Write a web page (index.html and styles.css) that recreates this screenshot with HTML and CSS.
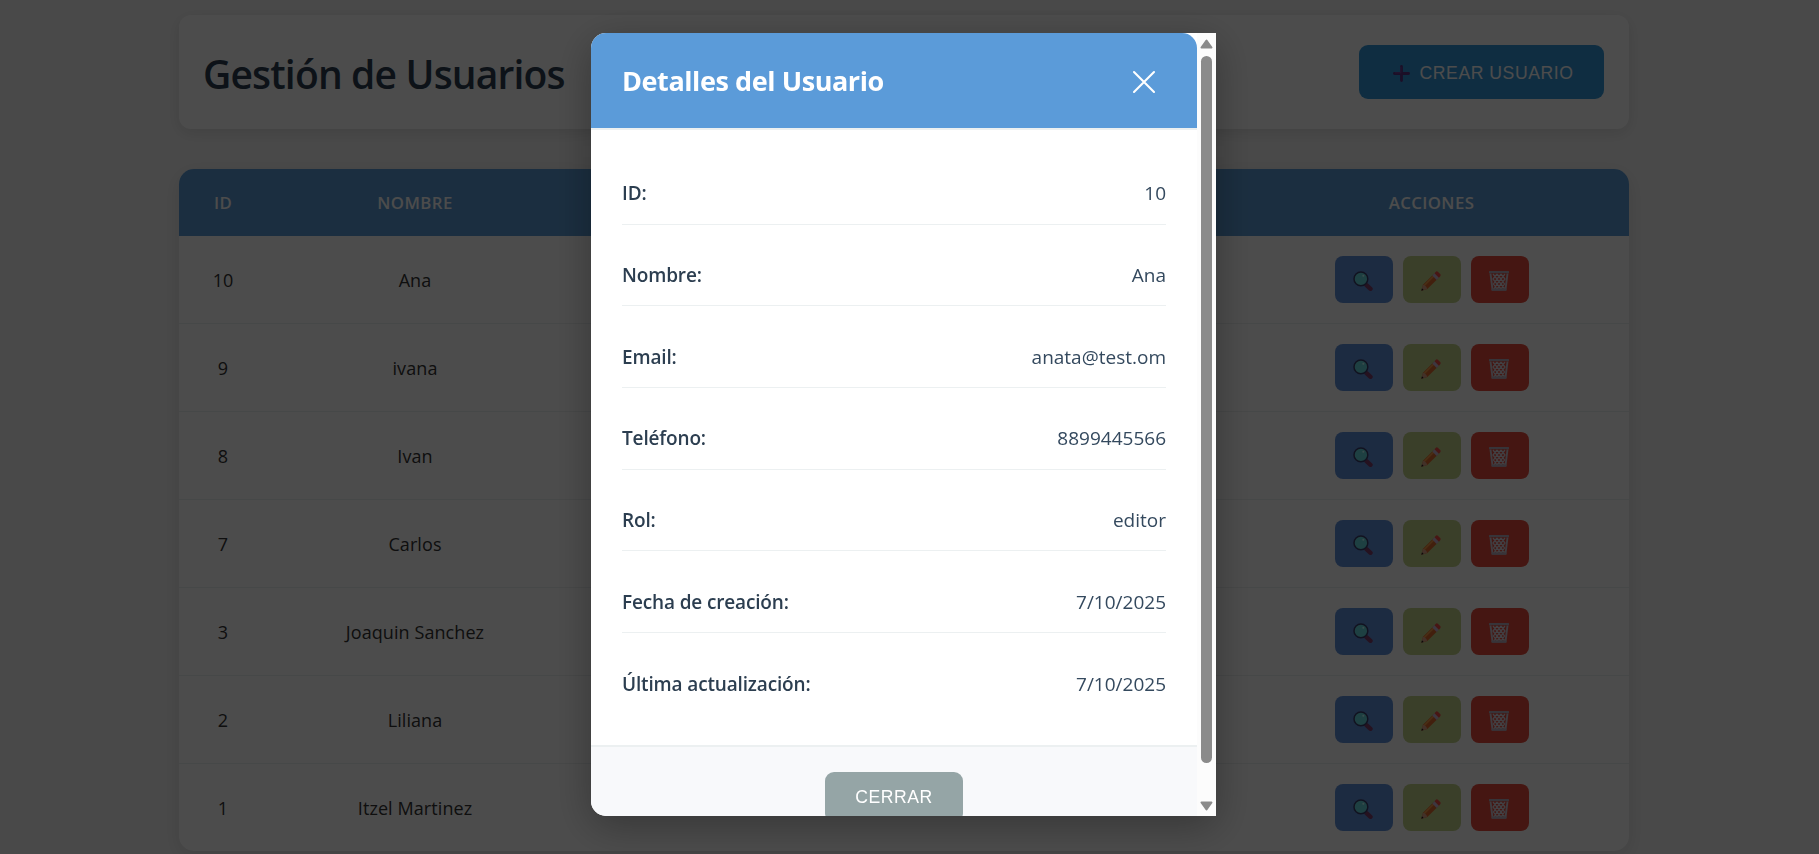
FILE: index.html
```
<!DOCTYPE html>
<html lang="es">
<head>
<meta charset="utf-8">
<title>Gestión de Usuarios</title>
<link rel="stylesheet" href="styles.css">
</head>
<body>
<svg class="sprites" aria-hidden="true">
  <symbol id="i-search" viewBox="0 0 20 20">
    <path d="M13.500 14.200L17.500 17.800" stroke="#7d3f6c" stroke-width="4.400" stroke-linecap="round"/>
    <circle cx="7.900" cy="7.900" r="6.900" fill="#66d8dc" stroke="#3b3f6c" stroke-width="1.500"/>
    <circle cx="10.300" cy="4.800" r="1" fill="#c4ffff"/>
  </symbol>
  <symbol id="i-edit" viewBox="0 0 20 20">
    <path d="M0.300 19.700L2 13.800L12.600 3.200L17 7.600L6.300 18Z" fill="#dc6a2c"/>
    <path d="M2.800 14.900L13.600 4.100" stroke="#f59a48" stroke-width="1.600"/>
    <path d="M0.300 19.700L2 13.800Q5.200 14.500 6.300 18Z" fill="#dca488"/>
    <path d="M0.300 19.700L1 17.300L2.700 19Z" fill="#222"/>
    <path d="M11.300 4.500L13.500 2.300L17.900 6.700L15.700 8.900Z" fill="#cbb8d6"/>
    <path d="M13.500 2.300L15.200 0.600Q16 0 16.800 0.700L19.400 3.300Q20 4.100 19.400 5L17.900 6.700Z" fill="#f04a44"/>
  </symbol>
  <symbol id="i-trash" viewBox="0 0 20 20">
    <path d="M1.500 2.500L3.500 18.500H16.500L18.500 2.500" fill="none" stroke="#cfc8d6" stroke-width="1.900"/>
    <path d="M4 3L8 8L4.500 13L8 18M8 3L12 8L8 13L12 18M12 3L16 8L12 13L15.500 17.500M8 3L4 8L8 13L5 18M12 3L8 8L12 13L8 18M16 3L12 8L15.500 13L12 18" fill="none" stroke="#dcd6e2" stroke-width="1.300"/>
    <path d="M0.800 1.200H19.200M3.500 18.700H16.500" stroke="#b8b0be" stroke-width="2.200" stroke-linecap="round"/>
  </symbol>
</svg>

<main class="page">
  <header class="topbar">
    <h1 class="topbar-title">Gestión de Usuarios</h1>
    <button class="btn btn-create">
      <svg class="plus" viewBox="0 0 18 18"><path d="M9 1.500V16.500M1.500 9H16.500" stroke="#5c3484" stroke-width="3" stroke-linecap="round"/><path d="M8.300 2V8.300H2" fill="none" stroke="#7a4aa2" stroke-width="1"/></svg>
      <span>CREAR USUARIO</span>
    </button>
  </header>

  <section class="table">
    <div class="row row-head"><span>ID</span><span>NOMBRE</span><span></span><span>ACCIONES</span></div>
    <div class="row"><span>10</span><span>Ana</span><span></span><div class="actions"><button class="act view"><svg><use href="#i-search"/></svg></button><button class="act edit"><svg><use href="#i-edit"/></svg></button><button class="act del"><svg><use href="#i-trash"/></svg></button></div></div>
    <div class="row"><span>9</span><span>ivana</span><span></span><div class="actions"><button class="act view"><svg><use href="#i-search"/></svg></button><button class="act edit"><svg><use href="#i-edit"/></svg></button><button class="act del"><svg><use href="#i-trash"/></svg></button></div></div>
    <div class="row"><span>8</span><span>Ivan</span><span></span><div class="actions"><button class="act view"><svg><use href="#i-search"/></svg></button><button class="act edit"><svg><use href="#i-edit"/></svg></button><button class="act del"><svg><use href="#i-trash"/></svg></button></div></div>
    <div class="row"><span>7</span><span>Carlos</span><span></span><div class="actions"><button class="act view"><svg><use href="#i-search"/></svg></button><button class="act edit"><svg><use href="#i-edit"/></svg></button><button class="act del"><svg><use href="#i-trash"/></svg></button></div></div>
    <div class="row"><span>3</span><span>Joaquin Sanchez</span><span></span><div class="actions"><button class="act view"><svg><use href="#i-search"/></svg></button><button class="act edit"><svg><use href="#i-edit"/></svg></button><button class="act del"><svg><use href="#i-trash"/></svg></button></div></div>
    <div class="row"><span>2</span><span>Liliana</span><span></span><div class="actions"><button class="act view"><svg><use href="#i-search"/></svg></button><button class="act edit"><svg><use href="#i-edit"/></svg></button><button class="act del"><svg><use href="#i-trash"/></svg></button></div></div>
    <div class="row"><span>1</span><span>Itzel Martinez</span><span class="mail">g</span><div class="actions"><button class="act view"><svg><use href="#i-search"/></svg></button><button class="act edit"><svg><use href="#i-edit"/></svg></button><button class="act del"><svg><use href="#i-trash"/></svg></button></div></div>
  </section>
</main>

<div class="overlay">
  <div class="modal" role="dialog">
    <div class="modal-main">
      <div class="modal-head">
        <h2 class="modal-title">Detalles del Usuario</h2>
        <svg class="close" viewBox="0 0 24 24"><path d="M2 2L22 22M22 2L2 22" stroke="#fff" stroke-width="2.100" stroke-linecap="round"/></svg>
      </div>
      <dl class="details">
        <div class="detail"><dt>ID:</dt><dd>10</dd></div>
        <div class="detail"><dt>Nombre:</dt><dd>Ana</dd></div>
        <div class="detail"><dt>Email:</dt><dd>anata@test.om</dd></div>
        <div class="detail"><dt>Teléfono:</dt><dd>8899445566</dd></div>
        <div class="detail"><dt>Rol:</dt><dd>editor</dd></div>
        <div class="detail"><dt>Fecha de creación:</dt><dd>7/10/2025</dd></div>
        <div class="detail"><dt>Última actualización:</dt><dd>7/10/2025</dd></div>
      </dl>
      <div class="modal-foot"><button class="btn btn-close">CERRAR</button></div>
    </div>
    <div class="scrollbar">
      <svg class="arrow" viewBox="0 0 13 10"><path d="M6.500 1.500L11.500 8.500H1.500Z" fill="#8b8b8b" stroke="#8b8b8b" stroke-width="2" stroke-linejoin="round"/></svg>
      <div class="thumb"></div>
      <svg class="arrow down" viewBox="0 0 13 10"><path d="M6.500 8.500L11.500 1.500H1.500Z" fill="#8b8b8b" stroke="#8b8b8b" stroke-width="2" stroke-linejoin="round"/></svg>
    </div>
  </div>
</div>
</body>
</html>
```

FILE: styles.css
```
* { box-sizing: border-box; }

body {
  margin: 0;
  height: 854px;
  overflow: hidden;
  background: #f5f5f5;
  color: #333;
  font-family: "Segoe UI", "Open Sans", "Noto Sans", sans-serif;
}

h1, h2, dl, dd { margin: 0; }
button { border: 0; font: inherit; }
.sprites { position: absolute; width: 0; height: 0; }

.page {
  width: 1450px;
  margin-left: 179px;
  padding-top: 15px;
}

.topbar {
  display: flex;
  align-items: center;
  justify-content: space-between;
  height: 114px;
  padding: 0 25px 0 24px;
  background: #fff;
  border-radius: 12px;
  box-shadow: 0 4px 15px rgba(0, 0, 0, .1);
}

.topbar-title {
  padding-top: 3px;
  color: #2c3e50;
  font-size: 39px;
  font-weight: 600;
  letter-spacing: -.83px;
  line-height: 54px;
}

.btn {
  display: flex;
  align-items: center;
  justify-content: center;
  border-radius: 9px;
  color: #fff;
  font-family: Arial, "Liberation Sans", sans-serif;
  font-size: 17.6px;
  letter-spacing: .55px;
}

.btn-create {
  width: 245px;
  height: 54px;
  gap: 10px;
  padding: 2px 0 0 3px;
  background: #3498db;
}
.plus { width: 17px; height: 17px; }

.table {
  margin-top: 40px;
  background: #fff;
  border-radius: 15px;
  overflow: hidden;
  box-shadow: 0 5px 20px rgba(0, 0, 0, .1);
}

.row {
  display: grid;
  grid-template-columns: 88px 296px 671px 395px;
  align-items: center;
  height: 88px;
  border-bottom: 1px solid #ecf0f1;
  font-size: 18px;
  letter-spacing: .08px;
  text-align: center;
}
.row:last-child { height: 87px; border-bottom: 0; }

.row-head {
  height: 67px;
  border: 0;
  background: #5b9bd5;
  color: #fff;
  font-size: 16.8px;
  font-weight: 600;
  letter-spacing: .4px;
}

.mail { padding: 0 411px 5px 0; }

.actions { display: flex; justify-content: center; gap: 10px; }
.act {
  display: flex;
  align-items: center;
  justify-content: center;
  width: 58px;
  height: 47px;
  padding: 2px 0 0;
  border-radius: 8px;
}
.act svg { width: 20px; height: 20px; margin-right: 1px; }
.view { background: #6090d9; }
.edit { background: #c1d289; }
.del { background: #e74c3c; }

.overlay {
  position: fixed;
  inset: 0;
  padding: 33px 0 0 591px;
  background: rgba(0, 0, 0, .7);
}

.modal {
  display: flex;
  width: 625px;
  height: 783px;
  overflow: hidden;
  background: #fff;
  border-radius: 15px 0 0 15px;
  box-shadow: 0 10px 40px rgba(0, 0, 0, .3);
}

.modal-main { width: 606px; }

.modal-head {
  display: flex;
  align-items: center;
  justify-content: space-between;
  height: 97px;
  padding: 0 41px 0 31px;
  background: #5b9bd9;
  border-bottom: 2px solid #ecf0f1;
  border-radius: 0 15px 0 0;
  color: #fff;
}
.modal-title { font-size: 27px; font-weight: 700; letter-spacing: -.42px; }
.close { width: 24px; height: 24px; margin-top: 3px; }

.details { height: 615px; padding: 13px 31px 0; }
.detail {
  display: flex;
  align-items: center;
  justify-content: space-between;
  height: 81.7px;
  padding-top: 20px;
  border-bottom: 1px solid #ecf0f1;
  font-size: 19px;
}
.detail:last-child { border-bottom: 0; }
.detail dt { color: #2c3e50; font-weight: 600; letter-spacing: -.15px; }
.detail dd { color: #34495e; }

.modal-foot {
  display: flex;
  justify-content: center;
  padding-top: 25px;
  height: 101px;
  background: #f8f9fb;
  border-top: 2px solid #ecf0f1;
}
.btn-close { width: 138px; height: 50px; background: #95a5a6; }

.scrollbar {
  display: flex;
  flex-direction: column;
  align-items: center;
  width: 19px;
  padding: 6px 0 5px;
  background: #fcfcfc;
}
.arrow { width: 13px; height: 10px; }
.thumb {
  width: 11px;
  height: 707px;
  margin-top: 7px;
  border-radius: 6px;
  background: #8b8b8b;
}
.down { margin-top: auto; }
```
